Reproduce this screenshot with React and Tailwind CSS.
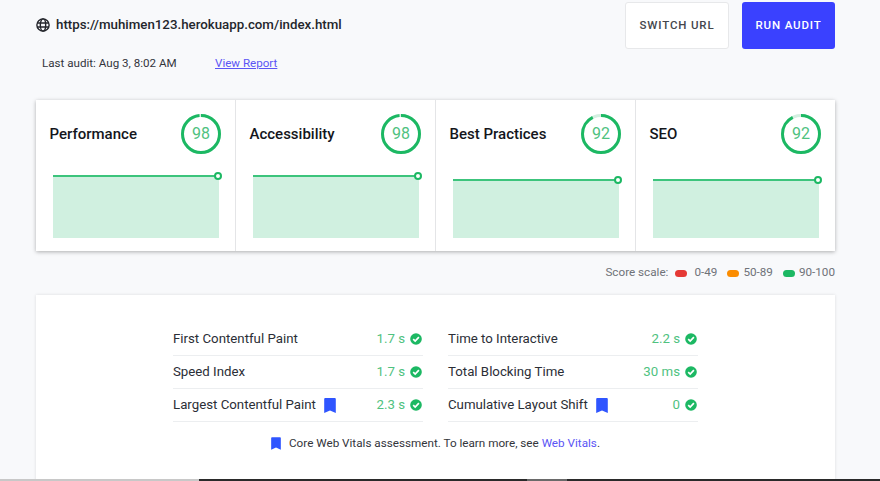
const cards = [
  { t: "Performance", s: 98, area: 63 },
  { t: "Accessibility", s: 98, area: 63 },
  { t: "Best Practices", s: 92, area: 59 },
  { t: "SEO", s: 92, area: 59 },
];

function Ring({ s }) {
  const r = 18.5;
  const c = 2 * Math.PI * r;
  return (
    <div className="relative w-[40px] h-[40px] shrink-0">
      <svg width="40" height="40" viewBox="0 0 40 40" className="-rotate-90">
        <circle cx="20" cy="20" r={r} fill="none" stroke="#d3efe0" strokeWidth="3" />
        <circle cx="20" cy="20" r={r} fill="none" stroke="#1cb863" strokeWidth="3" strokeDasharray={`${(c * s) / 100} ${c}`} />
      </svg>
      <span className="absolute inset-0 flex items-center justify-center text-[16px] text-[#4fc27f]">{s}</span>
    </div>
  );
}

function Card({ t, s, area, last }) {
  return (
    <div className={`flex-1 h-full pl-[13.5px] pr-[14px] pt-[14px] ${last ? "" : "border-r border-[#e4e5e7]"}`}>
      <div className="flex items-center justify-between h-[40px]">
        <span className="text-[15px] font-medium text-[#14161c]">{t}</span>
        <Ring s={s} />
      </div>
      <div className="ml-[3px] h-[84px] flex flex-col justify-end">
        <div className="bg-[#d0f0e0] w-[166px] border-t-2 border-[#3cc47c] relative" style={{ height: area }}>
          <span className="absolute -right-[3px] -top-[5px] w-[8px] h-[8px] rounded-full bg-white border-2 border-[#1cb863]" />
        </div>
      </div>
    </div>
  );
}

function Check() {
  return (
    <svg width="12" height="12" viewBox="0 0 12 12" className="ml-[5px] shrink-0">
      <circle cx="6" cy="6" r="5.8" fill="#1cb863" />
      <path d="M3.2 6.2 L5.2 8.1 L8.9 4.2" fill="none" stroke="#fff" strokeWidth="1.7" />
    </svg>
  );
}

function Mark({ w = 12, h = 15 }) {
  return (
    <svg width={w} height={h} viewBox="0 0 12 15" className="shrink-0 block">
      <path d="M1.2 0h9.6a1 1 0 0 1 1 1v14l-5.8-2.6L.2 15V1a1 1 0 0 1 1-1z" fill="#2f55ff" />
    </svg>
  );
}

function Metric({ name, value, mark }) {
  return (
    <div className="flex items-center h-[33px] border-b border-[#eceef0]">
      <span className="text-[#2b2e36]">{name}</span>
      {mark && <span className="ml-[8px]"><Mark /></span>}
      <span className="ml-auto text-[#4fc27f]">{value}</span>
      <Check />
      <span className="w-[1px]" />
    </div>
  );
}

export default function App() {
  return (
    <div className="w-[880px] h-[481px] overflow-hidden bg-[#f8f9fb] relative text-[13.25px]" style={{ fontFamily: "Roboto, sans-serif" }}>
      <div className="flex items-start justify-between pl-[36px] pr-[45px] pt-[2px]">
        <div className="flex items-center h-[46px] gap-[6px]">
          <svg width="14" height="14" viewBox="0 0 24 24" fill="none" stroke="#24262c" strokeWidth="2.4">
            <circle cx="12" cy="12" r="10.5" />
            <ellipse cx="12" cy="12" rx="4.6" ry="10.5" />
            <path d="M2 8.5h20M2 15.5h20" />
          </svg>
          <span className="text-[13.3px] font-medium text-[#24262c]">https://muhimen123.herokuapp.com/index.html</span>
        </div>
        <div className="flex gap-[13px]">
          <div className="w-[104px] h-[47px] bg-white border border-[#e7e8ea] rounded-[3px] flex items-center justify-center text-[11.5px] font-medium tracking-[0.85px] text-[#44464c]">SWITCH URL</div>
          <div className="w-[93px] h-[47px] bg-[#3a41ff] rounded-[3px] flex items-center justify-center text-[11.5px] font-medium tracking-[0.85px] text-white">RUN AUDIT</div>
        </div>
      </div>
      <div className="flex items-center pl-[42px] h-[20px] mt-[5px] text-[11.6px] text-[#33353b]">
        <span className="w-[173px]">Last audit: Aug 3, 8:02 AM</span>
        <span className="text-[#5b55f5] underline">View Report</span>
      </div>
      <div className="mx-[36px] mt-[26px] w-[799px] h-[151px] bg-white flex shadow-[0_1px_4px_rgba(0,0,0,0.3)]">
        {cards.map((c, i) => <Card key={c.t} {...c} last={i === 3} />)}
      </div>
      <div className="flex items-center justify-end pr-[45px] mt-[14px] h-[16px] text-[11.7px] text-[#6f7278]">
        <span>Score scale:</span>
        <span className="ml-[7px] w-[12px] h-[7px] rounded-full bg-[#e53935]" />
        <span className="ml-[7px]">0-49</span>
        <span className="ml-[10px] w-[12px] h-[7px] rounded-full bg-[#fb8c00]" />
        <span className="ml-[4px]">50-89</span>
        <span className="ml-[10px] w-[12px] h-[7px] rounded-full bg-[#1cb863]" />
        <span className="ml-[4px]">90-100</span>
      </div>
      <div className="mx-[36px] mt-[14px] w-[799px] h-[190px] bg-white shadow-[0_0_3px_rgba(0,0,0,0.12)] pt-[28px] flex flex-col items-center">
        <div className="w-[525px] grid grid-cols-2 gap-x-[25px]">
          <Metric name="First Contentful Paint" value="1.7 s" />
          <Metric name="Time to Interactive" value="2.2 s" />
          <Metric name="Speed Index" value="1.7 s" />
          <Metric name="Total Blocking Time" value="30 ms" />
          <Metric name="Largest Contentful Paint" value="2.3 s" mark />
          <Metric name="Cumulative Layout Shift" value="0" mark />
        </div>
        <div className="flex items-center mt-[13px] text-[11.7px] text-[#33353b]">
          <Mark w={10} h={13} />
          <span className="ml-[8px]">Core Web Vitals assessment. To learn more, see <span className="text-[#5b55f5]">Web Vitals</span>.</span>
        </div>
      </div>
      <div className="absolute left-0 right-0 bottom-0 h-[2px] flex">
        <div className="w-[199px] bg-[#c8c8c8]" />
        <div className="w-[328px] bg-[#2a2a2a]" />
        <div className="w-[40px] bg-[#6a6a6a]" />
        <div className="flex-1 bg-[#2a2a2a]" />
      </div>
    </div>
  );
}
